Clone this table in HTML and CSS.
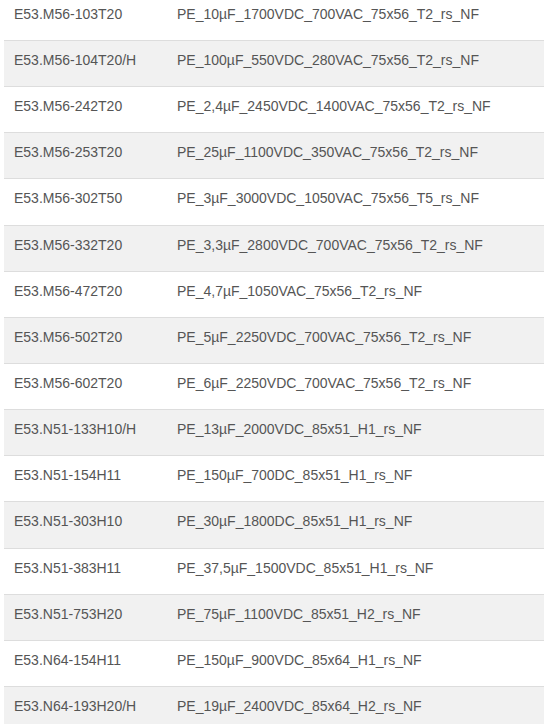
FILE: index.html
```html
<!DOCTYPE html>
<html>
<head>
<meta charset="utf-8">
<link rel="stylesheet" href="styles.css">
</head>
<body>
<table class="parts">
<colgroup><col class="col-code"><col class="col-desc"></colgroup>
<tbody>
<tr><td>E53.M56-103T20</td><td>PE_10µF_1700VDC_700VAC_75x56_T2_rs_NF</td></tr>
<tr><td>E53.M56-104T20/H</td><td>PE_100µF_550VDC_280VAC_75x56_T2_rs_NF</td></tr>
<tr><td>E53.M56-242T20</td><td>PE_2,4µF_2450VDC_1400VAC_75x56_T2_rs_NF</td></tr>
<tr><td>E53.M56-253T20</td><td>PE_25µF_1100VDC_350VAC_75x56_T2_rs_NF</td></tr>
<tr><td>E53.M56-302T50</td><td>PE_3µF_3000VDC_1050VAC_75x56_T5_rs_NF</td></tr>
<tr><td>E53.M56-332T20</td><td>PE_3,3µF_2800VDC_700VAC_75x56_T2_rs_NF</td></tr>
<tr><td>E53.M56-472T20</td><td>PE_4,7µF_1050VAC_75x56_T2_rs_NF</td></tr>
<tr><td>E53.M56-502T20</td><td>PE_5µF_2250VDC_700VAC_75x56_T2_rs_NF</td></tr>
<tr><td>E53.M56-602T20</td><td>PE_6µF_2250VDC_700VAC_75x56_T2_rs_NF</td></tr>
<tr><td>E53.N51-133H10/H</td><td>PE_13µF_2000VDC_85x51_H1_rs_NF</td></tr>
<tr><td>E53.N51-154H11</td><td>PE_150µF_700DC_85x51_H1_rs_NF</td></tr>
<tr><td>E53.N51-303H10</td><td>PE_30µF_1800DC_85x51_H1_rs_NF</td></tr>
<tr><td>E53.N51-383H11</td><td>PE_37,5µF_1500VDC_85x51_H1_rs_NF</td></tr>
<tr><td>E53.N51-753H20</td><td>PE_75µF_1100VDC_85x51_H2_rs_NF</td></tr>
<tr><td>E53.N64-154H11</td><td>PE_150µF_900VDC_85x64_H1_rs_NF</td></tr>
<tr><td>E53.N64-193H20/H</td><td>PE_19µF_2400VDC_85x64_H2_rs_NF</td></tr>
</tbody>
</table>
</body>
</html>
```
FILE: styles.css
```css
html, body {
  margin: 0;
  padding: 0;
  background: #fff;
  overflow: hidden;
}
body {
  font-family: "Liberation Sans", Arial, sans-serif;
  font-size: 14px;
  color: #555;
}
.parts {
  border-collapse: collapse;
  table-layout: fixed;
  margin: -6.15px 0 0 4px;
  width: 540px;
}
.col-code {
  width: 163px;
}
.parts tr {
  border-top: 1px solid #dddddd;
}
.parts tr:nth-child(even) {
  background: #f1f1f1;
}
.parts td {
  padding: 9px 10px 16.15px 10px;
  line-height: 20px;
  white-space: nowrap;
  overflow: hidden;
  text-align: left;
  vertical-align: top;
}
```
